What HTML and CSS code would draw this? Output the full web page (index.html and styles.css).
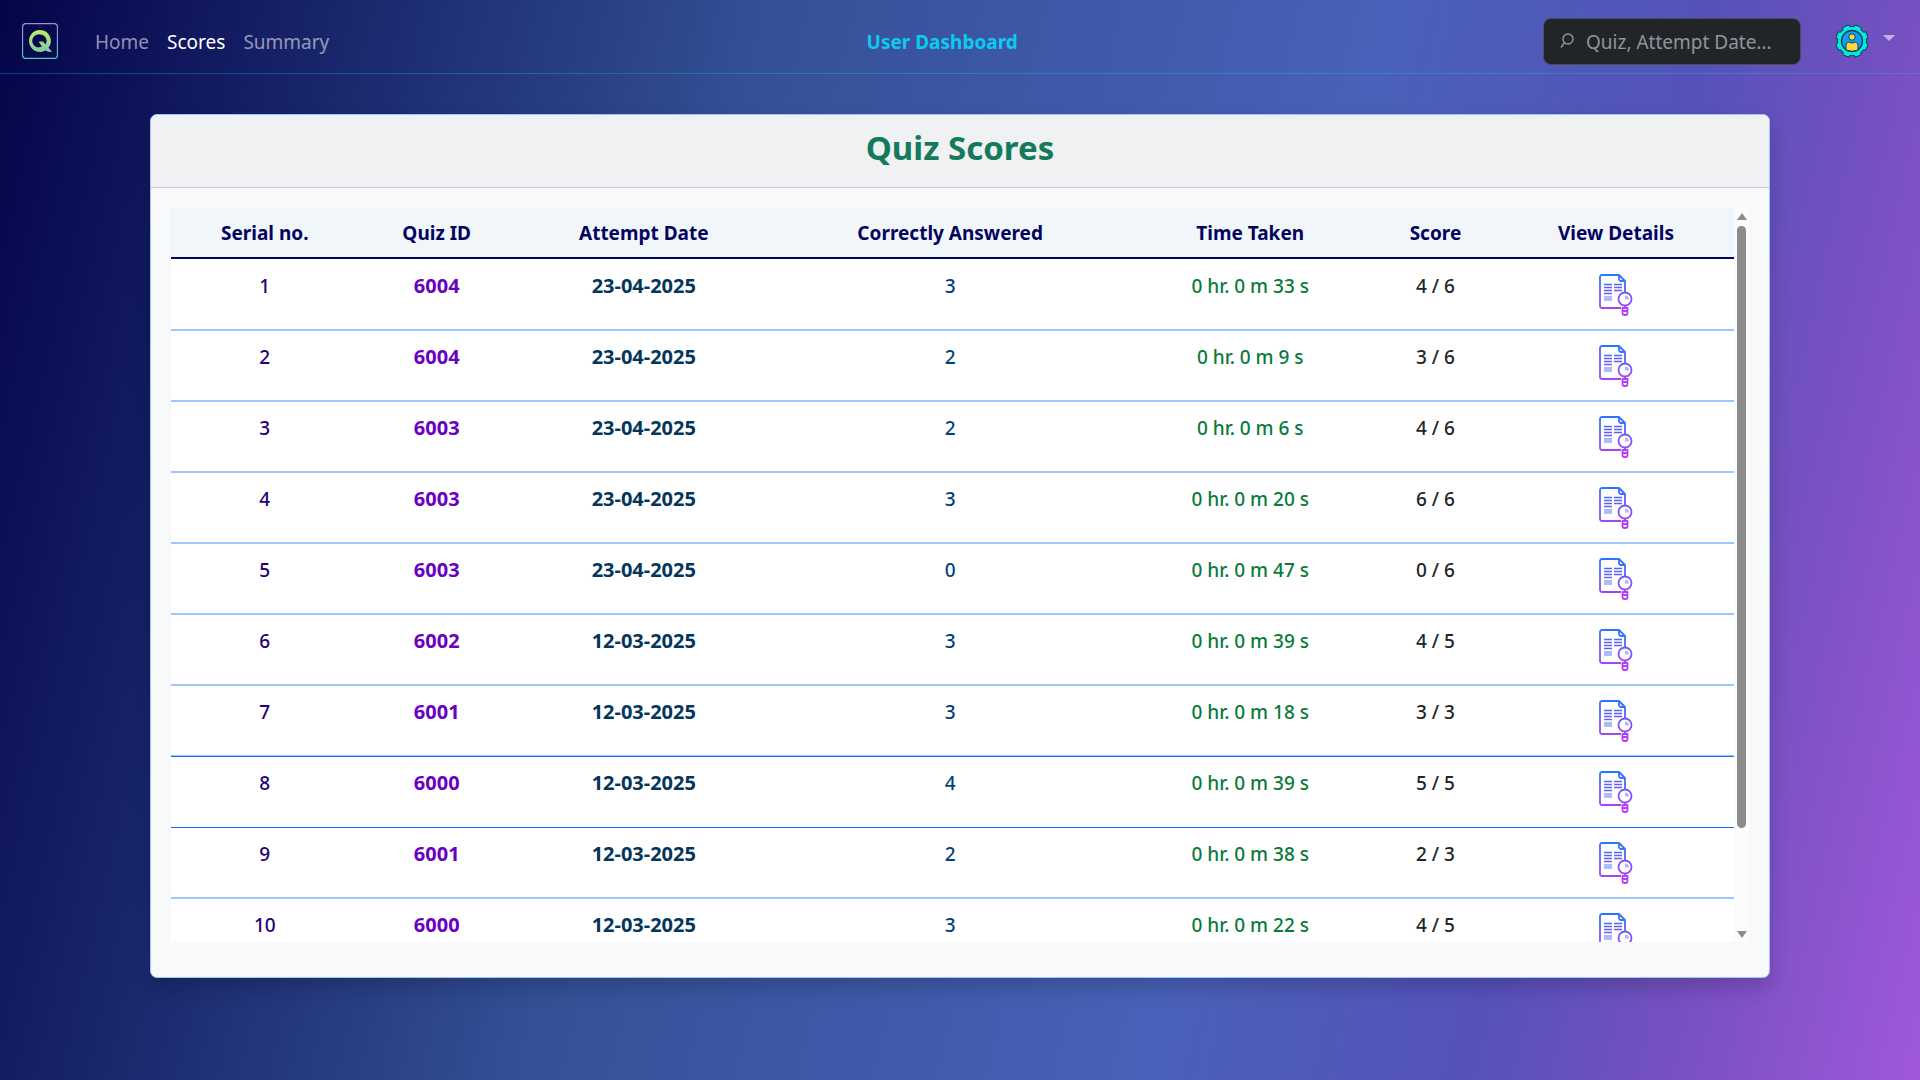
FILE: index.html
```html
<!DOCTYPE html>
<html lang="en">
<head>
<meta charset="utf-8">
<title>Quiz Scores</title>
<link rel="stylesheet" href="styles.css">
</head>
<body>
<svg class="defs" aria-hidden="true">
  <defs>
    <linearGradient id="doc-stroke" gradientUnits="userSpaceOnUse" x1="0" y1="0" x2="0" y2="42">
      <stop offset="0" stop-color="#2478ff"/>
      <stop offset="1" stop-color="#c637f0"/>
    </linearGradient>
    <linearGradient id="doc-fill" gradientUnits="userSpaceOnUse" x1="0" y1="20" x2="0" y2="28">
      <stop offset="0" stop-color="#8ec2fb"/>
      <stop offset="1" stop-color="#c4b8fb"/>
    </linearGradient>
    <symbol id="details" viewBox="0 0 34 42">
      <g fill="none" stroke="url(#doc-stroke)" stroke-width="1.8" stroke-linejoin="round">
        <path d="M22 34H3a2 2 0 0 1-2-2V3a2 2 0 0 1 2-2h17l6 6v11"/>
        <path d="M20 1v4a2 2 0 0 0 2 2h4"/>
        <circle cx="26" cy="25" r="6.5"/>
        <path d="M26 31.500V34"/>
        <path d="M23.500 34h5v5a2 2 0 0 1-2 2h-1a2 2 0 0 1-2-2zM23.500 37h5"/>
      </g>
      <path d="M5 10.500h8M15 10.500h8M5 13.500h8M15 13.500h8M5 16.500h8M15 16.500h8M5 19.500h8" stroke="url(#doc-stroke)" stroke-width="1.300"/>
      <rect x="5" y="22" width="8" height="5" fill="url(#doc-fill)"/>
      <path d="M26 21.500a4 4 0 0 1 4 4h-4z" fill="#b5b4fc"/>
    </symbol>
  </defs>
</svg>
<header class="navbar">
  <a class="brand" href="#" aria-label="Quiz home">
    <svg width="36" height="36" viewBox="0 0 36 36">
      <defs>
        <linearGradient id="frame" x1="0" y1="0" x2="0" y2="1"><stop offset="0" stop-color="#a18cd1"/><stop offset="1" stop-color="#4fc9b4"/></linearGradient>
        <linearGradient id="letter" x1="0" y1="0" x2="0" y2="1"><stop offset="0" stop-color="#c3ee6a"/><stop offset="1" stop-color="#7fc9a4"/></linearGradient>
      </defs>
      <rect x="0.500" y="0.500" width="35" height="35" rx="3.500" fill="none" stroke="url(#frame)" stroke-width="1.300"/>
      <path fill="url(#letter)" fill-rule="evenodd" d="M18 7a11 11 0 1 0 5.500 20.500c1.500 1.200 3.500 1.700 6.500 1.300l-3.500-4A11 11 0 0 0 18 7zM18 11.500a6.500 6.500 0 0 1 5.500 10l-2.500-3h-4.500l3.500 5A6.500 6.500 0 1 1 18 11.500z"/>
    </svg>
  </a>
  <nav class="links">
    <a href="#">Home</a>
    <a href="#" class="active" aria-current="page">Scores</a>
    <a href="#">Summary</a>
  </nav>
  <span class="nav-title">User Dashboard</span>
  <div class="tools">
    <label class="search">
      <svg width="14" height="16" viewBox="0 0 14 16" fill="none" stroke="currentColor" stroke-width="1.400" aria-hidden="true"><circle cx="8" cy="6" r="5"/><path d="M4.500 9.500L1 14.500"/></svg>
      <input type="text" placeholder="Quiz, Attempt Date..." aria-label="Search by quiz or attempt date">
    </label>
    <button class="profile" type="button" aria-label="Account menu">
      <svg width="34" height="34" viewBox="0 0 34 34">
        <defs>
          <g id="gear">
            <circle cx="17" cy="17" r="14"/>
            <g id="teeth"><path d="M13.500 4L14.200 1.300h5.600L20.500 4V30L19.800 32.700H14.200L13.500 30z" transform="rotate(22.5 17 17)"/><path d="M13.500 4L14.200 1.300h5.600L20.500 4V30L19.800 32.700H14.200L13.500 30z" transform="rotate(67.5 17 17)"/></g>
            <use href="#teeth" transform="rotate(90 17 17)"/>
          </g>
        </defs>
        <use href="#gear" fill="#153a6e" stroke="#153a6e" stroke-width="2" stroke-linejoin="round"/>
        <use href="#gear" fill="#00eed6"/>
        <circle cx="17" cy="17" r="10.500" fill="#0f9fe8" stroke="#153a6e" stroke-width="1.400"/>
        <circle cx="17" cy="13" r="3.200" fill="#ffd93b" stroke="#153a6e"/>
        <path d="M11 26v-4c0-3 2-4.500 4-3.500q2 1.200 4 0c2-1 4 .5 4 3.500v4q-6 2.500-12 0z" fill="#ffd93b" stroke="#153a6e"/>
      </svg>
      <span class="caret"></span>
    </button>
  </div>
</header>
<main class="card">
  <h1>Quiz Scores</h1>
  <div class="card-body">
    <div class="viewport">
      <div class="rows">
        <table>
          <colgroup><col class="c-serial"><col class="c-quiz"><col class="c-date"><col class="c-correct"><col class="c-time"><col class="c-score"><col class="c-view"></colgroup>
          <thead>
            <tr><th>Serial no.</th><th>Quiz ID</th><th>Attempt Date</th><th>Correctly Answered</th><th>Time Taken</th><th>Score</th><th>View Details</th></tr>
          </thead>
          <tbody id="scores"></tbody>
        </table>
      </div>
      <div class="scrollbar" aria-hidden="true"><span class="up"></span><span class="thumb"></span><span class="down"></span></div>
    </div>
  </div>
</main>
<script src="scores.js"></script>
</body>
</html>
```
FILE: scores.js
```js
const attempts = [
  ['6004', '23-04-2025', 3, '0 hr. 0 m 33 s', '4 / 6'],
  ['6004', '23-04-2025', 2, '0 hr. 0 m 9 s', '3 / 6'],
  ['6003', '23-04-2025', 2, '0 hr. 0 m 6 s', '4 / 6'],
  ['6003', '23-04-2025', 3, '0 hr. 0 m 20 s', '6 / 6'],
  ['6003', '23-04-2025', 0, '0 hr. 0 m 47 s', '0 / 6'],
  ['6002', '12-03-2025', 3, '0 hr. 0 m 39 s', '4 / 5'],
  ['6001', '12-03-2025', 3, '0 hr. 0 m 18 s', '3 / 3', 'edge-top'],
  ['6000', '12-03-2025', 4, '0 hr. 0 m 39 s', '5 / 5', 'edge-bottom'],
  ['6001', '12-03-2025', 2, '0 hr. 0 m 38 s', '2 / 3'],
  ['6000', '12-03-2025', 3, '0 hr. 0 m 22 s', '4 / 5']
];
document.getElementById('scores').innerHTML = attempts.map(([quiz, date, correct, time, score, edge = ''], i) => `
  <tr class="${edge}">
    <td class="serial">${i + 1}</td><td class="quiz">${quiz}</td><td class="date">${date}</td>
    <td class="correct">${correct}</td><td class="time">${time}</td><td>${score}</td>
    <td class="view"><button type="button" aria-label="View details of attempt ${i + 1}"><svg width="34" height="42"><use href="#details"/></svg></button></td>
  </tr>`).join('');
```
FILE: styles.css
```css
* { box-sizing: border-box; }
body {
  margin: 0;
  min-height: 100vh;
  font: 19px/30px "Noto Sans", "Open Sans", sans-serif;
  color: #212529;
  background: linear-gradient(103deg, #04044a 0%, #345197 36%, #4961b8 64%, #5552b9 79%, #7550c0 88%, #a058dc 100%) fixed;
}
.defs { position: absolute; width: 0; height: 0; }
.navbar {
  display: flex;
  align-items: center;
  height: 74px;
  padding: 9px 25px 0 22px;
  border-bottom: 1px solid rgba(13, 202, 240, .3);
}
.brand { display: flex; width: 73px; }
.links { display: flex; gap: 18px; padding: 2px 12px 0 0; }
.links a { color: rgba(255, 255, 255, .55); text-decoration: none; }
.links a.active { color: #fff; }
.nav-title { margin: 0 auto; padding-top: 2px; font-weight: 700; color: #0dcaf0; }
.tools { display: flex; align-items: center; gap: 34px; }
.search {
  display: flex;
  align-items: center;
  gap: 12px;
  width: 258px;
  height: 47px;
  padding: 0 12px 0 16px;
  border: 1px solid #495057;
  border-radius: 8px;
  background: #212529;
  color: #909498;
}
.search svg { flex: none; }
.search input { flex: 1; min-width: 0; padding: 2px 0 0; border: 0; outline: 0; background: none; font: inherit; color: #dee2e6; }
.search input::placeholder { color: #909498; opacity: 1; }
.profile { display: flex; align-items: center; gap: 14px; padding: 0; border: 0; background: none; }
.caret { margin-bottom: 6px; border: 6px solid transparent; border-top-color: #c4b0e6; border-bottom: 0; }
.card {
  width: calc(100% - 300px);
  margin: 40px auto 60px;
  border: 1px solid #9ec5fe;
  border-radius: 7px;
  background: #f8f9fb;
  box-shadow: 0 10px 20px rgba(0, 0, 0, .18);
  overflow: hidden;
}
h1 {
  margin: 0;
  padding: 12px 20px 18px;
  border-bottom: 1px solid #c4c6ca;
  background: #f0f1f3;
  color: #147a5c;
  font-size: 33px;
  line-height: 42px;
  text-align: center;
}
.card-body { padding: 20px 20px 35px; }
.viewport { display: flex; max-height: 734px; }
.rows { flex: 1; overflow: hidden; }
table { width: 100%; table-layout: fixed; border-collapse: separate; border-spacing: 0; background: #fff; text-align: center; font-weight: 500; }
.c-serial { width: 12%; }
.c-quiz { width: 10%; }
.c-date { width: 16.5%; }
.c-correct { width: 22.7%; }
.c-time { width: 15.7%; }
.c-score { width: 8%; }
.c-view { width: 15.1%; }
th { padding: 10px 0 9px; border-bottom: 2px solid #03045e; background: #f0f6fa; color: #03045e; font-weight: 700; }
td { height: 71px; padding: 11px 0 0; border-bottom: 2px solid #9ec5fe; vertical-align: top; }
tbody tr:first-child td { height: 72px; padding-top: 12px; }
.edge-top td { border-bottom: 1px solid #0d6efd; box-shadow: inset 0 -1px #9ec5fe; }
.edge-bottom td { border-bottom: 1px solid #0d6efd; }
.serial { color: #240072; }
.quiz { color: #6a00c0; font-size: 20px; font-weight: 700; }
.date { color: #04365c; font-size: 20px; font-weight: 700; }
.correct { color: #023e7d; }
.time { color: #087a3a; }
.view button { display: inline-flex; padding: 3px 0 0; border: 0; background: none; }
.scrollbar { display: flex; flex-direction: column; align-items: center; flex: none; width: 15px; padding: 5px 0 4px; background: #fcfcfc; }
.thumb { flex: none; width: 9px; height: 83%; margin-top: 6px; border-radius: 5px; background: #8b8b8b; }
.up, .down { border: 5px solid transparent; }
.up { border-top: 0; border-bottom: 7px solid #8b8b8b; }
.down { margin-top: auto; border-bottom: 0; border-top: 7px solid #8b8b8b; }
```
